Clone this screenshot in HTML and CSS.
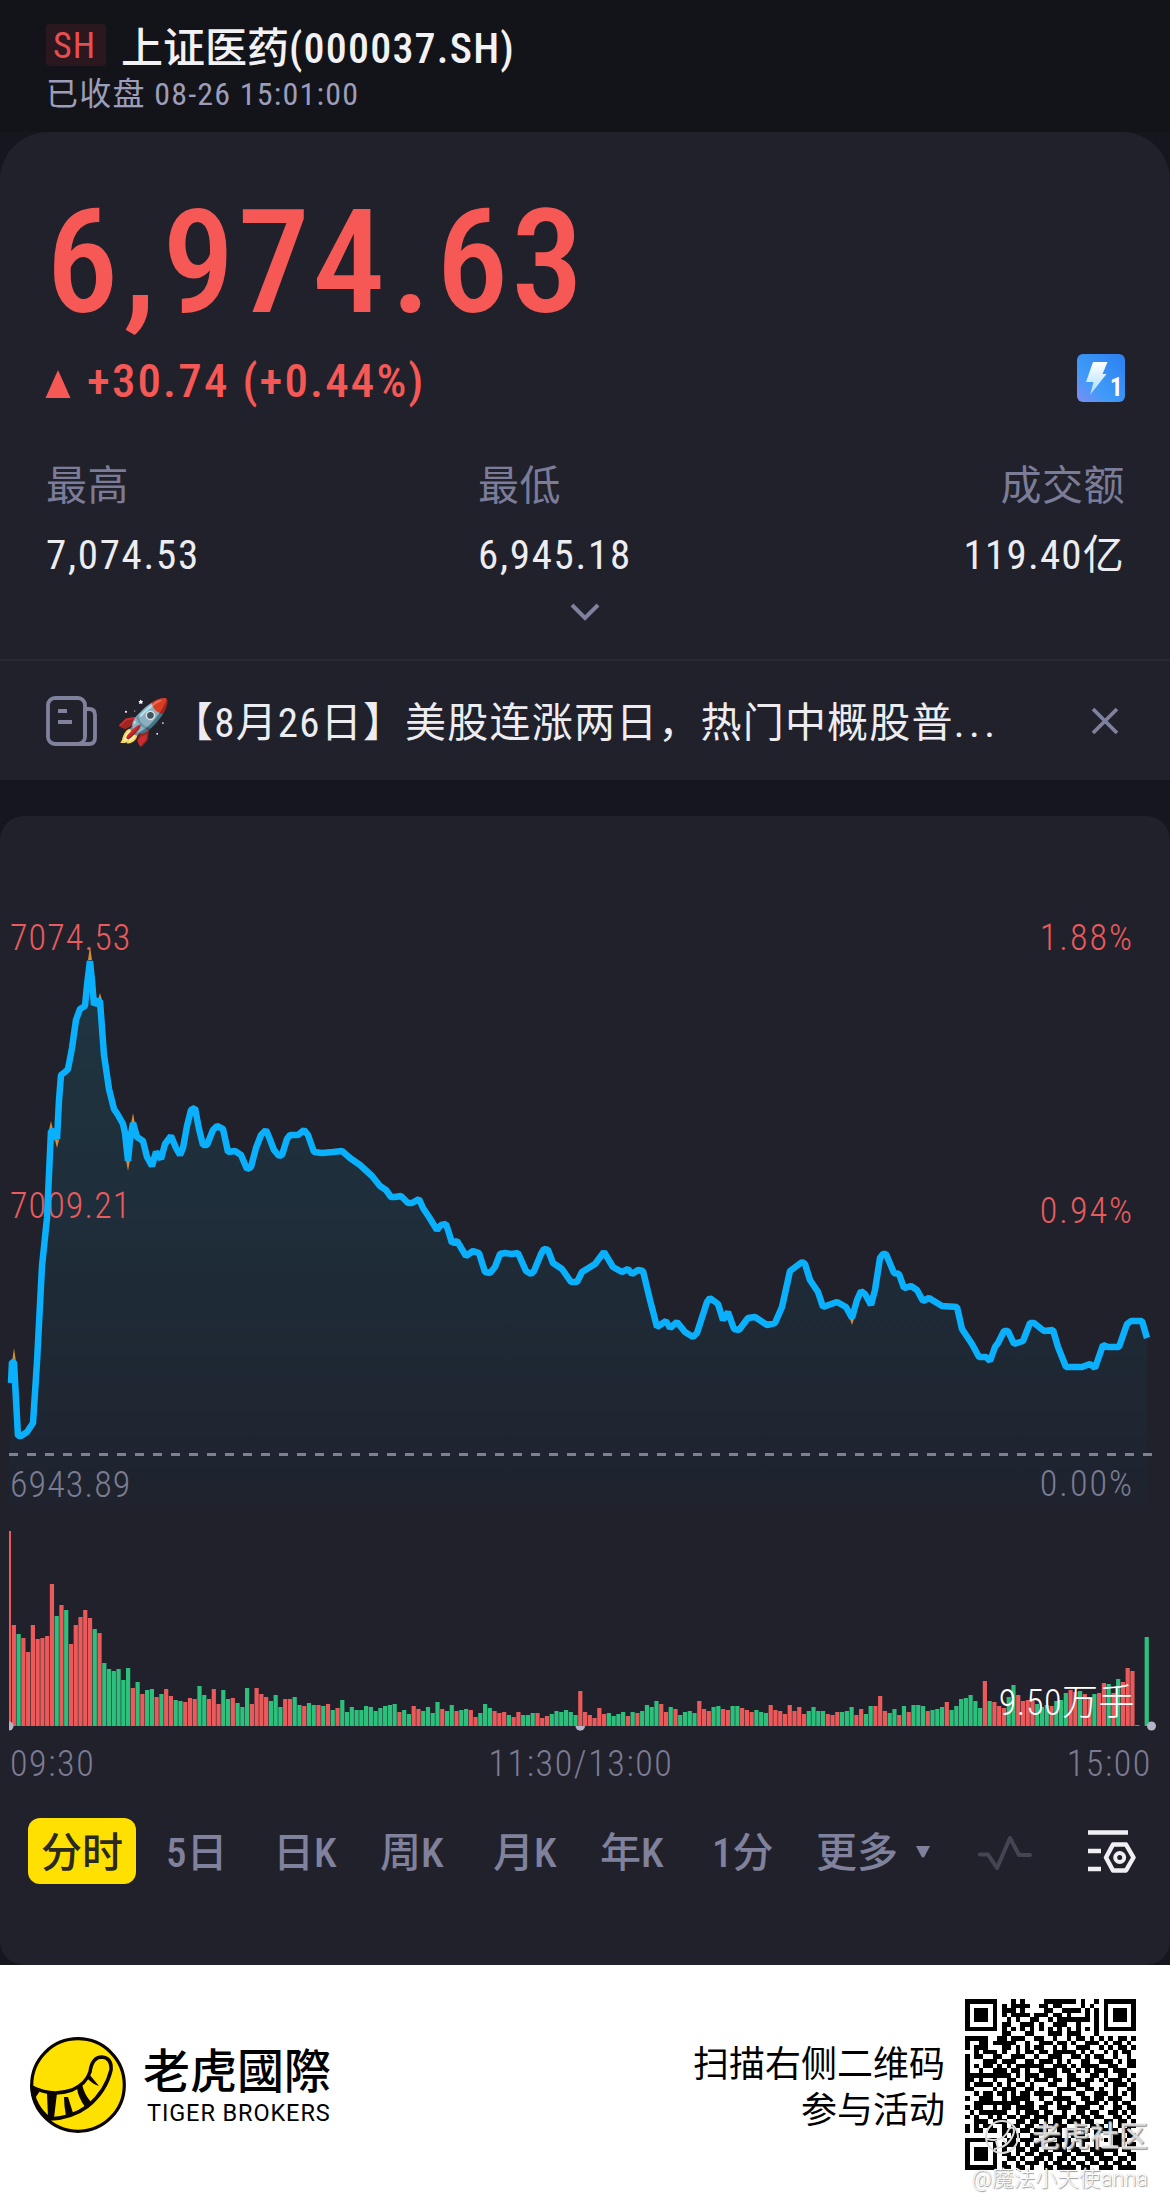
FILE: index.html
```html
<!DOCTYPE html>
<html lang="zh-CN">
<head>
  <meta charset="UTF-8" />
  <meta name="viewport" content="width=device-width, initial-scale=1.0" />
  <title>上证医药(000037.SH)</title>
  <link rel="stylesheet" href="styles.css">
</head>
<body>
  <div class="app">
    <div class="header">
      <div class="title-row">
        <span class="market">SH</span>
        <span class="title">上证医药<span class="code">(000037.SH)</span></span>
      </div>
      <div class="status">已收盘 08-26 15:01:00</div>
    </div>

    <!-- Quote -->
    <div class="quote">
      <div class="price">6<span class="comma">,</span>974<span class="dot">.</span>63</div>
      <div class="change-row">
        <svg class="up" width="26" height="28" viewBox="0 0 26 28"><path d="M13 0L25.500 28H.5z" fill="#f55855"/></svg>
        <span class="change">+30.74 (+0.44%)</span>
        <svg class="level" width="48" height="48" viewBox="0 0 48 48">
          <defs>
            <linearGradient id="lv" x1="0" y1="1" x2="1" y2="0">
              <stop offset="0" stop-color="#7f8cf5"/>
              <stop offset=".35" stop-color="#3f9bf8"/>
              <stop offset="1" stop-color="#2c7ff0"/>
            </linearGradient>
            <linearGradient id="bolt" x1="0" y1="0" x2="0" y2="1">
              <stop offset="0" stop-color="#fff"/>
              <stop offset="1" stop-color="#a9dcff"/>
            </linearGradient>
          </defs>
          <rect width="48" height="48" rx="6" fill="url(#lv)"/>
          <path d="M16 8H30.500L25.500 20H29.500L13 41L16.500 28H9z" fill="url(#bolt)"/>
          <text class="level-num" x="33" y="42">1</text>
        </svg>
      </div>
      <div class="stats">
        <div class="stat">
          <div class="label">最高</div>
          <div class="value">7,074.53</div>
        </div>
        <div class="stat">
          <div class="label">最低</div>
          <div class="value">6,945.18</div>
        </div>
        <div class="stat right">
          <div class="label">成交额</div>
          <div class="value">119.40亿</div>
        </div>
      </div>
      <svg class="expand" width="30" height="18" viewBox="0 0 30 18"><path d="M2 2L15 15L28 2" fill="none" stroke="#80819e" stroke-width="4"/></svg>
      <div class="news">
        <svg class="news-icon" width="52" height="50" viewBox="0 0 52 50" fill="none" stroke="#80819c" stroke-width="3.800">
          <rect x="2" y="2" width="37" height="46" rx="7"/>
          <path d="M39 13h4q6 0 6 6v23q0 6-6 6H32M39 13v27"/>
          <path d="M12 15h9M12 26h14"/>
        </svg>
        <span class="rocket">🚀</span>
        <span class="news-text">【8月26日】美股连涨两日，热门中概股普<span class="dots">...</span></span>
        <svg class="close" width="28" height="28" viewBox="0 0 28 28"><path d="M2 2L26 26M26 2L2 26" stroke="#80819e" stroke-width="3.800"/></svg>
      </div>
    </div>

    <!-- Intraday chart -->
    <div class="chart-card">
      <svg class="chart" width="1170" height="920" viewBox="0 816 1170 920">
        <defs>
          <linearGradient id="fill" gradientUnits="userSpaceOnUse" x1="0" y1="960" x2="0" y2="1505">
            <stop offset="0" stop-color="#1e3642"/>
            <stop offset=".5" stop-color="#1e2d39"/>
            <stop offset="1" stop-color="#1e232e"/>
          </linearGradient>
        </defs>
        <path id="area" fill="url(#fill)"/>
        <line x1="9" y1="1454.500" x2="1152" y2="1454.500" stroke="#7f8093" stroke-width="3" stroke-dasharray="9 9"/>
        <text class="axis up" x="10" y="950">7074.53</text>
        <text class="axis up" x="10" y="1218">7009.21</text>
        <text class="axis" x="10" y="1497">6943.89</text>
        <text class="axis up end" x="1134" y="950">1.88%</text>
        <text class="axis up end" x="1134" y="1223">0.94%</text>
        <text class="axis end" x="1134" y="1496">0.00%</text>
        <path d="M12 1362l2-14l2 14zM88 960l2-14l2 14zM49 1130l2-9l2 9zM55 1140l2 8l2-8zM98 1000l2-7l2 7zM126 1160l2 11l2-11zM131 1124l2-11l2 11zM850 1319l2 6l2-6z" fill="#d98b32"/>
        <path id="line" fill="none" stroke="#0bb0fc" stroke-width="6.500" stroke-linejoin="bevel"/>
        <g id="bars"></g>
        <g fill="#b4b4c8">
          <path d="M9 1721.500a4.500 4.500 0 0 1 0 9z"/>
          <path d="M575.500 1726h9.500a4.700 4.700 0 0 1-9.500 0z"/>
          <circle cx="1151.500" cy="1726" r="4.500"/>
        </g>
        <text class="axis volume end" x="1135" y="1715">9.50万手</text>
      </svg>
      <div class="times">
        <span>09:30</span>
        <span>11:30/13:00</span>
        <span>15:00</span>
      </div>
      <div class="tabs">
        <span class="tab active">分时</span>
        <span class="tab">5日</span>
        <span class="tab">日K</span>
        <span class="tab">周K</span>
        <span class="tab">月K</span>
        <span class="tab">年K</span>
        <span class="tab">1分</span>
        <span class="tab more">更多<svg width="16" height="12" viewBox="0 0 16 12"><path d="M1 0h14L9.500 10.500q-1.500 2-3 0z" fill="#80819c"/></svg></span>
        <svg class="wave" width="54" height="38" viewBox="0 0 54 38"><path d="M2 20.500H10L19 34L32 4L41 21H52" fill="none" stroke="#444553" stroke-width="4" stroke-linejoin="round" stroke-linecap="round"/></svg>
        <svg class="setting" width="48" height="44" viewBox="0 0 48 44" fill="none" stroke="#f0f0f4" stroke-width="4.500">
          <path d="M0 3.500H40M0 22H13M0 40H13"/>
          <path d="M25 15.500h13L45.500 28.500L38 41.500H25L18 28.500z" stroke-linejoin="round"/>
          <circle cx="31.700" cy="28.500" r="4.500" stroke-width="4"/>
        </svg>
      </div>
    </div>

    <!-- Share footer -->
    <div class="footer">
      <svg class="logo" width="96" height="96" viewBox="0 0 96 96">
        <circle cx="48" cy="48" r="46.300" fill="#ffe100" stroke="#0a0500" stroke-width="3.200"/>
        <path d="M2 50Q22 60 42 53Q56 47 60 35Q62 20 72 20Q82 21 81 33Q76 54 58 69Q42 81 20 82Q4 70 2 50z" fill="#ffe100" stroke="#0a0500" stroke-width="3.500"/>
        <path d="M2 50L10 54Q6 59 4 64zM17 56H27L24 81H18zM34 60H38L43 76L36 79Q34 69 34 60zM47 51L52 47Q54 57 61 65L55 70Q48 60 47 51zM56 40L59 37Q64 43 69 49Q62 47 56 40z" fill="#0a0500"/>
      </svg>
      <div class="brand">
        <div class="brand-cn">老虎國際</div>
        <div class="brand-en">TIGER BROKERS</div>
      </div>
      <div class="scan">扫描右侧二维码<br>参与活动</div>
      <svg class="qr" width="171" height="171" viewBox="0 0 37 37" shape-rendering="crispEdges"><path id="qr" fill="#000"/></svg>
      <div class="watermark">
        <svg width="36" height="36" viewBox="0 0 36 36" fill="none" stroke="#ddd" stroke-width="2">
          <circle cx="18" cy="18" r="16"/>
          <path d="M3 20Q20 24 25 10Q30 6 30 13Q26 28 10 30M12 22l2 7M19 20l4 6"/>
        </svg>
        <span>老虎社区</span>
      </div>
      <div class="author">@魔法小天使anna</div>
    </div>
  </div>

  <script src="chart.js"></script>
</body>
</html>
```
FILE: styles.css
```css
body {
  margin: 0;
  background: #fff;
  font-family: "Roboto Condensed", "Noto Sans CJK SC", sans-serif;
}

.app {
  width: 1170px;
  height: 2205px;
  overflow: hidden;
  background: #16161e;
}

.header {
  box-sizing: border-box;
  height: 132px;
  padding: 20px 46px 0;
  background: #131419;
}

.title-row {
  display: flex;
  align-items: center;
  height: 50px;
}

.market {
  width: 60px;
  height: 42px;
  margin-right: 15px;
  border-radius: 4px;
  background: #2b181f;
  color: #e84e50;
  font-size: 36px;
  line-height: 45px;
  letter-spacing: 1px;
  text-indent: -3px;
  text-align: center;
}

.title {
  margin-top: -2px;
  color: #f2f2f5;
  font-size: 42px;
  font-weight: 500;
}

.code {
  letter-spacing: 1.2px;
}

.status {
  color: #9c9db8;
  font-size: 32px;
  line-height: 48px;
  letter-spacing: 1.2px;
}

/* Quote */
.quote {
  display: flex;
  flex-direction: column;
  box-sizing: border-box;
  height: 648px;
  padding-top: 68px;
  border-radius: 48px 48px 0 0;
  background: #21212b;
}

.price {
  padding-left: 46px;
  color: #f55855;
  font-size: 145px;
  font-weight: 500;
  line-height: 124px;
  letter-spacing: 2.7px;
}

.comma {
  margin: 0 4px 0 2px;
}

.dot {
  margin: 0 2px 0 3px;
}

.change-row {
  display: flex;
  align-items: center;
  height: 60px;
  margin: 26px 45px 0;
}

.up {
  margin-top: 8px;
}

.change {
  flex: 1;
  margin-left: 16px;
  color: #f55855;
  font-size: 47px;
  font-weight: 500;
  letter-spacing: 2.1px;
}

.level {
  margin-bottom: 5px;
}

.level-num {
  fill: #fff;
  font-size: 25px;
  font-weight: 700;
}

.stats {
  display: grid;
  grid-template-columns: 432px 432px 1fr;
  margin: 51px 45px 0 46px;
  font-size: 41px;
  line-height: 50px;
}

.label {
  color: #7b7c97;
  letter-spacing: 0.5px;
}

.value {
  margin-top: 19px;
  color: #ededf1;
  letter-spacing: 1.7px;
}

.right {
  text-align: right;
}

.right .value {
  letter-spacing: 1.2px;
}

.expand {
  margin: 23px auto 0;
}

.news {
  display: flex;
  align-items: center;
  box-sizing: border-box;
  height: 121px;
  margin-top: auto;
  padding: 0 51px 0 46px;
  border-top: 2px solid #292933;
}

.rocket {
  width: 54px;
  margin: 3px 0 0 18px;
  font-size: 44px;
}

.news-text {
  flex: 1;
  margin: -3px 0 0 2px;
  color: #ededf1;
  font-size: 41px;
  letter-spacing: 1.2px;
  white-space: nowrap;
}

.dots {
  letter-spacing: 4.5px;
}

/* Chart */
.chart-card {
  height: 1149px;
  margin-top: 36px;
  border-radius: 24px;
  background: #21212b;
}

.chart {
  display: block;
}

.axis {
  fill: #7b7c93;
  font-size: 36px;
  font-weight: 300;
  letter-spacing: 1.1px;
}

.axis.up {
  fill: #ea5b5e;
}

.axis.end {
  text-anchor: end;
  letter-spacing: 2px;
}

.axis.volume {
  fill: #fff;
  letter-spacing: 0.5px;
}

.times {
  display: flex;
  justify-content: space-between;
  padding: 3px 18px 0 10px;
  color: #7b7c93;
  font-size: 36px;
  font-weight: 300;
  line-height: 50px;
  letter-spacing: 1.6px;
}

.tabs {
  display: grid;
  grid-template-columns: 138px 107px 107px 113px 107px 112px 104px 162px 110px 1fr;
  align-items: center;
  height: 66px;
  margin-top: 29px;
  padding-left: 28px;
}

.tab {
  height: 66px;
  color: #80819c;
  font-size: 41px;
  font-weight: 500;
  line-height: 70px;
  white-space: nowrap;
}

.tab.active {
  width: 108px;
  border-radius: 12px;
  background: #ffe000;
  color: #2b2a20;
  text-align: center;
}

.more svg {
  margin-left: 17px;
  vertical-align: 9px;
}

.wave {
  margin-top: 3px;
}

/* Footer */
.footer {
  position: relative;
  display: flex;
  align-items: flex-start;
  box-sizing: border-box;
  height: 240px;
  padding: 34px 34px 0 30px;
  background: #fff;
  color: #000;
}

.logo {
  margin-top: 38px;
}

.brand {
  margin: 37px 0 0 17px;
}

.brand-cn {
  font-family: "Noto Sans CJK TC", sans-serif;
  font-size: 47px;
  font-weight: 500;
  line-height: 64px;
}

.brand-en {
  margin: -2px 0 0 4px;
  font-family: Roboto, sans-serif;
  font-size: 23.5px;
  line-height: 30px;
  letter-spacing: 0.9px;
}

.scan {
  flex: 1;
  margin: 43px 20px 0 0;
  font-size: 36px;
  line-height: 46px;
  text-align: right;
}

.watermark {
  position: absolute;
  top: 152px;
  right: 22px;
  display: flex;
  align-items: center;
  gap: 12px;
  color: rgba(240, 240, 240, 0.8);
  font-size: 29px;
  font-weight: 500;
  line-height: 40px;
  text-shadow: 1px 1px 1px #888;
}

.author {
  position: absolute;
  right: 22px;
  bottom: 12px;
  color: #fff;
  font-family: Roboto, "Noto Sans CJK SC", sans-serif;
  font-size: 21.8px;
  font-weight: 300;
  line-height: 28px;
  text-shadow: 1px 1px 1px #999, 0 0 1px #bbb;
}
```
FILE: chart.js
```javascript
// minute line, x,y pairs
const points = `11,1383 12,1362 14,1362 17,1418 18,1436 21,1436 27,1432 33,1423 37,1362 42,1266 47,1218 49,1174 51,1131 53,1131
57,1139 59,1100 61,1075 65,1072 68,1069 72,1048 76,1020 80,1009 85,1006 87,985 90,961 92,981 94,1005 97,1001 100,1001
104,1055 109,1089 114,1109 118,1115 123,1124 125,1133 128,1161 130,1140 133,1123 137,1137 143,1141 147,1157 152,1166
154,1159 156,1152 161,1159 165,1144 171,1136 176,1148 180,1155 183,1148 187,1126 191,1110 195,1108 199,1129 203,1145
207,1145 213,1130 217,1126 223,1129 228,1152 235,1151 241,1155 247,1169 251,1167 256,1148 261,1135 266,1130 269,1137
274,1150 279,1156 282,1155 287,1139 290,1135 298,1135 304,1130 308,1135 314,1152 322,1153 333,1152 342,1151 350,1158
360,1165 372,1176 380,1186 386,1190 391,1197 395,1197 401,1196 408,1203 412,1203 419,1199 423,1208 429,1217 437,1230
441,1225 446,1224 448,1230 452,1243 457,1241 466,1256 473,1251 479,1253 485,1272 490,1273 495,1267 500,1254 505,1253
512,1254 518,1253 526,1271 531,1274 534,1271 541,1254 544,1249 548,1250 553,1263 562,1269 571,1282 577,1282 582,1272
595,1264 604,1252 613,1267 622,1272 628,1269 632,1274 638,1270 643,1271 650,1300 657,1327 666,1321 670,1328 677,1322
685,1332 693,1337 697,1333 707,1302 710,1298 718,1304 723,1320 728,1312 734,1329 739,1330 748,1318 755,1317 767,1325
775,1323 782,1307 790,1271 802,1262 805,1264 810,1280 818,1292 823,1307 837,1302 846,1307 852,1318 857,1300 861,1291
865,1294 871,1305 875,1290 880,1258 883,1254 886,1254 894,1273 899,1274 904,1288 911,1286 917,1290 923,1301 929,1298
942,1306 957,1307 962,1329 972,1344 979,1357 986,1357 990,1361 995,1347 998,1343 1004,1331 1008,1331 1014,1344
1023,1341 1030,1323 1034,1323 1044,1331 1053,1330 1058,1347 1066,1367 1075,1367 1082,1367 1090,1364 1095,1368
1103,1345 1108,1347 1119,1347 1127,1324 1131,1321 1142,1321 1147,1338`.split(/\s+/).join(' L');

document.getElementById('line').setAttribute('d', 'M' + points);
document.getElementById('area').setAttribute('d', 'M' + points + ' V1505 H9 Z');

// volume per minute: r = up, g = down
const volume = `r195 r101 g92 r88 r74 r101 r87 r88 r90 r142 g110 r121 g116 r82 r101 r109 r116 r108 g97 r93
g63 g57 g55 g57 g46 g58 r38 g44 r32 g36 g37 r29 g32 r37 r30 g26 g25 r24 r28 r27
g40 g31 r27 r37 r22 g36 g27 r28 g23 g19 g38 r22 r38 r32 r29 g25 g31 g19 r27 r27
g29 g21 r20 g23 g21 r21 g20 r22 g16 r18 g26 g14 g19 g16 g16 g20 g19 g15 g18 g20
g21 g22 r14 g16 g12 r20 r17 g15 g19 g13 g24 r17 g15 g21 r15 g16 g17 r16 r9 g13
g22 g18 r15 r13 r14 g11 r9 r14 g11 g11 g13 r13 r8 r10 g12 g15 g14 g16 g14 g11
r35 r14 r11 r8 r18 r12 g13 g10 g12 g14 r10 g14 r13 g15 g21 g19 g25 r22 r14 g19
r17 g11 g14 g15 g13 r25 r17 r15 g19 g20 r17 r16 g20 g20 r18 r16 r14 g16 g14 g13
r21 r16 r15 r12 r21 r15 r19 r12 g15 g19 g15 g15 r12 r11 r14 g14 g15 g19 r11 r17
g12 g20 r20 r30 r15 g13 g17 r11 g20 r14 g21 g21 g20 r15 g16 g17 g19 r24 g16 g20
g27 g28 g31 g25 g18 r45 g25 r24 r20 r18 g29 g41 r31 r25 r26 r26 g22 g19 g21 r20
g25 g26 g33 r36 r34 g35 r32 r28 g32 r33 r43 g42 r33 g47 r44 r58 r55 r1 r0 g89`.split(/\s+/);

let bars = '';
volume.forEach((v, i) => {
  const h = Number(v.slice(1));
  const x = i === 0 ? 9 : 7 + i * 4.76;
  bars += `<rect x="${x}" y="${1726 - h}" width="${i === 0 ? 2 : 4.2}" height="${h}" fill="${v[0] === 'r' ? '#eb5a5a' : '#2cc07c'}"/>`;
});
document.getElementById('bars').innerHTML = bars;

// qr modules
const rows = [
  '1111111000101000011111110100100111111',
  '1000001010111100110110000101000100000',
  '1011101011101000011001111010100101110',
  '1011101010111101110110100010110101110',
  '1011101001010011001011111110100101110',
  '1000001011001110100111001000110100000',
  '1111111010101010101010101010100111111',
  '0000000011000110001110111000100000000',
  '1111100110111001100100101101010101101',
  '1001101111100100111011010011101011010',
  '1011100011010101100101001110010101101',
  '0010111010010110110111110101001010110',
  '1011001100111001001110011010110010010',
  '1000111011100110111010100110011101011',
  '1010110101011111100111010111100110011',
  '1001001110110100111101101010111011100',
  '1111111111010111011100110001101001101',
  '1101001001100101110110111011010111010',
  '1011110101011010001100101110001011101',
  '1100001011100110100011110011010010011',
  '0010110110101101111010001100111010101',
  '1001110010111100100111100110110111001',
  '0011111111110110011010110011101010110',
  '1011001011011110110011101110010011011',
  '0101111110010111011001001101100110101',
  '1010010101101101110111010110110011010',
  '0011101110011011010110111011001101101',
  '1010110010110110101111001101110101011',
  '1011011011101101110010110110111110110',
  '0000000010110011011110011100100011011',
  '1111111001101110110011101110101011100',
  '1000001011110101101110110100100011011',
  '1011101010011011010111011001111110110',
  '1011101011010110111001101110110010011',
  '1011101001101001101011010011011101101',
  '1000001010010111010110101101101011010',
  '1111111011011010011011110110011101111'
];
const finder = ['1111111', '1000001', '1011101', '1011101', '1011101', '1000001', '1111111'];
let d = '';
for (let y = 0; y < 37; y++) {
  for (let x = 0; x < 37; x++) {
    let on = rows[y][x] === '1';
    if (x > 28 && y < 8) on = x > 29 && y < 7 && finder[y][x - 30] === '1';
    if (on) d += `M${x} ${y}h1v1h-1z`;
  }
}
document.getElementById('qr').setAttribute('d', d);
```
